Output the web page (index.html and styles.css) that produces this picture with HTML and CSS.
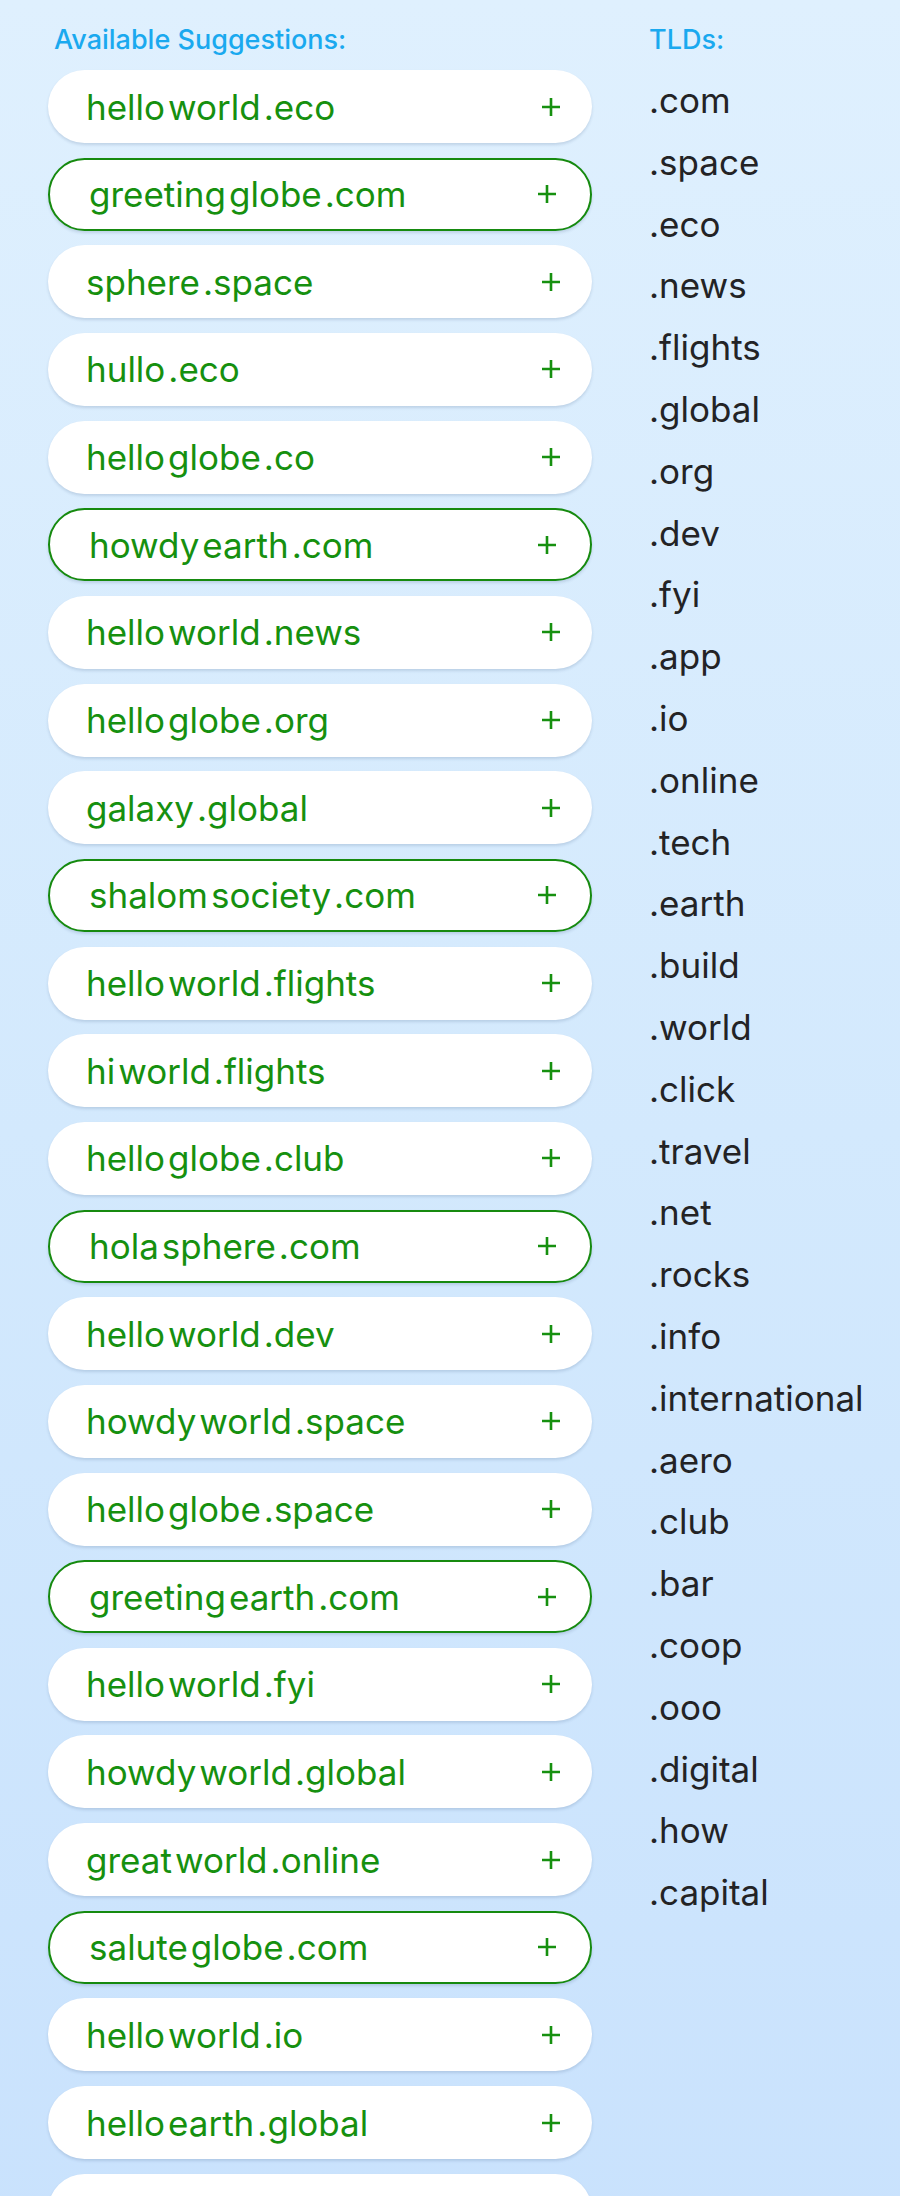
FILE: index.html
```html
<!DOCTYPE html>
<html lang="en">
<head>
<meta charset="utf-8">
<title>Domain suggestions</title>
<link rel="stylesheet" href="styles.css">
</head>
<body>
<main class="page">
  <section class="suggest">
    <h2 class="heading">Available Suggestions:</h2>
    <ul class="cards">
      <li class="card"><span class="name"><span>hello</span><span>world</span><span>.eco</span></span><svg class="plus" viewBox="0 0 18 18"><path d="M9 0v18M0 9h18"/></svg></li>
      <li class="card picked"><span class="name"><span>greeting</span><span>globe</span><span>.com</span></span><svg class="plus" viewBox="0 0 18 18"><path d="M9 0v18M0 9h18"/></svg></li>
      <li class="card"><span class="name"><span>sphere</span><span>.space</span></span><svg class="plus" viewBox="0 0 18 18"><path d="M9 0v18M0 9h18"/></svg></li>
      <li class="card"><span class="name"><span>hullo</span><span>.eco</span></span><svg class="plus" viewBox="0 0 18 18"><path d="M9 0v18M0 9h18"/></svg></li>
      <li class="card"><span class="name"><span>hello</span><span>globe</span><span>.co</span></span><svg class="plus" viewBox="0 0 18 18"><path d="M9 0v18M0 9h18"/></svg></li>
      <li class="card picked"><span class="name"><span>howdy</span><span>earth</span><span>.com</span></span><svg class="plus" viewBox="0 0 18 18"><path d="M9 0v18M0 9h18"/></svg></li>
      <li class="card"><span class="name"><span>hello</span><span>world</span><span>.news</span></span><svg class="plus" viewBox="0 0 18 18"><path d="M9 0v18M0 9h18"/></svg></li>
      <li class="card"><span class="name"><span>hello</span><span>globe</span><span>.org</span></span><svg class="plus" viewBox="0 0 18 18"><path d="M9 0v18M0 9h18"/></svg></li>
      <li class="card"><span class="name"><span>galaxy</span><span>.global</span></span><svg class="plus" viewBox="0 0 18 18"><path d="M9 0v18M0 9h18"/></svg></li>
      <li class="card picked"><span class="name"><span>shalom</span><span>society</span><span>.com</span></span><svg class="plus" viewBox="0 0 18 18"><path d="M9 0v18M0 9h18"/></svg></li>
      <li class="card"><span class="name"><span>hello</span><span>world</span><span>.flights</span></span><svg class="plus" viewBox="0 0 18 18"><path d="M9 0v18M0 9h18"/></svg></li>
      <li class="card"><span class="name"><span>hi</span><span>world</span><span>.flights</span></span><svg class="plus" viewBox="0 0 18 18"><path d="M9 0v18M0 9h18"/></svg></li>
      <li class="card"><span class="name"><span>hello</span><span>globe</span><span>.club</span></span><svg class="plus" viewBox="0 0 18 18"><path d="M9 0v18M0 9h18"/></svg></li>
      <li class="card picked"><span class="name"><span>hola</span><span>sphere</span><span>.com</span></span><svg class="plus" viewBox="0 0 18 18"><path d="M9 0v18M0 9h18"/></svg></li>
      <li class="card"><span class="name"><span>hello</span><span>world</span><span>.dev</span></span><svg class="plus" viewBox="0 0 18 18"><path d="M9 0v18M0 9h18"/></svg></li>
      <li class="card"><span class="name"><span>howdy</span><span>world</span><span>.space</span></span><svg class="plus" viewBox="0 0 18 18"><path d="M9 0v18M0 9h18"/></svg></li>
      <li class="card"><span class="name"><span>hello</span><span>globe</span><span>.space</span></span><svg class="plus" viewBox="0 0 18 18"><path d="M9 0v18M0 9h18"/></svg></li>
      <li class="card picked"><span class="name"><span>greeting</span><span>earth</span><span>.com</span></span><svg class="plus" viewBox="0 0 18 18"><path d="M9 0v18M0 9h18"/></svg></li>
      <li class="card"><span class="name"><span>hello</span><span>world</span><span>.fyi</span></span><svg class="plus" viewBox="0 0 18 18"><path d="M9 0v18M0 9h18"/></svg></li>
      <li class="card"><span class="name"><span>howdy</span><span>world</span><span>.global</span></span><svg class="plus" viewBox="0 0 18 18"><path d="M9 0v18M0 9h18"/></svg></li>
      <li class="card"><span class="name"><span>great</span><span>world</span><span>.online</span></span><svg class="plus" viewBox="0 0 18 18"><path d="M9 0v18M0 9h18"/></svg></li>
      <li class="card picked"><span class="name"><span>salute</span><span>globe</span><span>.com</span></span><svg class="plus" viewBox="0 0 18 18"><path d="M9 0v18M0 9h18"/></svg></li>
      <li class="card"><span class="name"><span>hello</span><span>world</span><span>.io</span></span><svg class="plus" viewBox="0 0 18 18"><path d="M9 0v18M0 9h18"/></svg></li>
      <li class="card"><span class="name"><span>hello</span><span>earth</span><span>.global</span></span><svg class="plus" viewBox="0 0 18 18"><path d="M9 0v18M0 9h18"/></svg></li>
      <li class="card card-edge" aria-hidden="true"></li>
    </ul>
  </section>
  <section class="tlds">
    <h2 class="heading">TLDs:</h2>
    <ul class="tld-list">
      <li>.com</li><li>.space</li><li>.eco</li><li>.news</li><li>.flights</li>
      <li>.global</li><li>.org</li><li>.dev</li><li>.fyi</li><li>.app</li>
      <li>.io</li><li>.online</li><li>.tech</li><li>.earth</li><li>.build</li>
      <li>.world</li><li>.click</li><li>.travel</li><li>.net</li><li>.rocks</li>
      <li>.info</li><li>.international</li><li>.aero</li><li>.club</li><li>.bar</li>
      <li>.coop</li><li>.ooo</li><li>.digital</li><li>.how</li><li>.capital</li>
    </ul>
  </section>
</main>
</body>
</html>
```

FILE: styles.css
```css
html, body {
  margin: 0;
  padding: 0;
}

body {
  min-height: 2196px;
  background: linear-gradient(180deg, #dff0fe 0%, #d3e9fd 50%, #c9e2fd 100%);
  font-family: Inter, "Noto Sans", "Liberation Sans", sans-serif;
  overflow: hidden;
}

.page {
  display: grid;
  grid-template-columns: 544px 1fr;
  column-gap: 57px;
  padding-left: 48px;
}

.heading {
  margin: 0 0 15px;
  padding-top: 25px;
  font-size: 27px;
  line-height: 30px;
  font-weight: 500;
  color: #1aa9ef;
}

.suggest .heading {
  padding-left: 6px;
}

.cards,
.tld-list {
  list-style: none;
  margin: 0;
  padding: 0;
}

.card {
  box-sizing: border-box;
  height: 73px;
  margin-bottom: 14.67px;
  padding: 0 32px 0 38px;
  display: flex;
  align-items: center;
  justify-content: space-between;
  background: #ffffff;
  border-radius: 37px;
  box-shadow: 0 2px 3px rgba(40, 70, 110, 0.16);
  color: #16900f;
  font-size: 35px;
  line-height: 42px;
}

.card.picked {
  border: 2px solid #168a0f;
  padding: 0 34px 0 39px;
}

.name {
  display: inline-flex;
  gap: 3px;
  white-space: nowrap;
}

.plus {
  width: 18px;
  height: 18px;
  flex: none;
  stroke: #16900f;
  stroke-width: 2.6;
  fill: none;
}

.tld-list li {
  font-size: 35px;
  line-height: 61.8px;
  color: #232325;
}
```
